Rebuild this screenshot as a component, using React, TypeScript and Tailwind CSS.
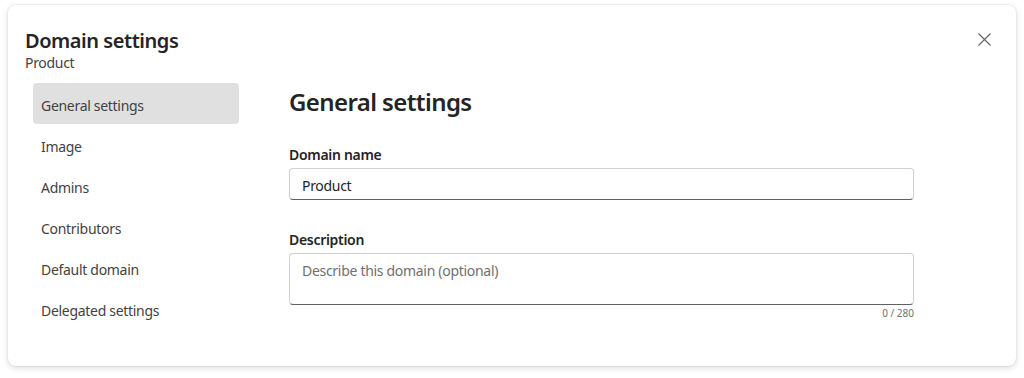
import React from "react";

const navItems = [
  "General settings",
  "Image",
  "Admins",
  "Contributors",
  "Default domain",
  "Delegated settings",
];

export default function App() {
  return (
    <div
      className="w-[1024px] h-[378px] bg-white pt-[5px] pl-[8px]"
      style={{ fontFamily: '"Noto Sans", "Open Sans", sans-serif' }}
    >
      <div className="relative w-[1008px] h-[361px] rounded-lg bg-white shadow-[0_0_2px_rgba(0,0,0,0.12),0_2px_6px_rgba(0,0,0,0.14)] text-[#242424]">
        <button className="absolute right-[20px] top-[22px] w-[24px] h-[24px] flex items-center justify-center text-[#616161]">
          <svg width="13" height="13" viewBox="0 0 13 13" fill="none">
            <path d="M0.5 0.5L12.5 12.5M12.5 0.5L0.5 12.5" stroke="currentColor" strokeWidth="1.1" />
          </svg>
        </button>
        <div className="pl-[17px] pt-[22px]">
          <div className="text-[20px] leading-[28px] font-semibold tracking-[-0.45px]">Domain settings</div>
          <div className="text-[14px] leading-[20px] text-[#424242] -mt-[2px] tracking-[-0.3px]">Product</div>
        </div>
        <div className="flex mt-[10px]">
          <div className="ml-[25px] w-[206px] flex flex-col">
            {navItems.map((item, i) => (
              <div
                key={item}
                className={
                  "h-[41px] rounded-[4px] px-[8px] pt-[4px] flex items-center text-[14px] tracking-[-0.3px] text-[#424242] " +
                  (i === 0 ? "bg-[#e0e0e0] text-[#242424]" : "")
                }
              >
                {item}
              </div>
            ))}
          </div>
          <div className="ml-[50px] w-[625px] flex flex-col">
            <div className="mt-[3px] text-[24px] leading-[32px] font-semibold tracking-[-0.6px]">General settings</div>
            <div className="mt-[27px] text-[14px] leading-[20px] font-semibold tracking-[-0.3px]">Domain name</div>
            <div className="mt-[3px] h-[32px] rounded-[4px] border border-[#d1d1d1] border-b-[#616161] bg-white flex items-center px-[12px] pt-[2px] text-[14px] tracking-[-0.3px]">
              Product
            </div>
            <div className="mt-[30px] text-[14px] leading-[20px] font-semibold tracking-[-0.3px]">Description</div>
            <div className="mt-[3px] h-[52px] rounded-[4px] border border-[#d1d1d1] border-b-[#616161] bg-white px-[12px] pt-[7px] text-[14px] leading-[20px] text-[#707070] tracking-[-0.3px]">
              Describe this domain (optional)
            </div>
            <div className="text-right text-[10px] leading-[14px] text-[#707070] mt-[1px]">0 / 280</div>
          </div>
        </div>
      </div>
    </div>
  );
}
